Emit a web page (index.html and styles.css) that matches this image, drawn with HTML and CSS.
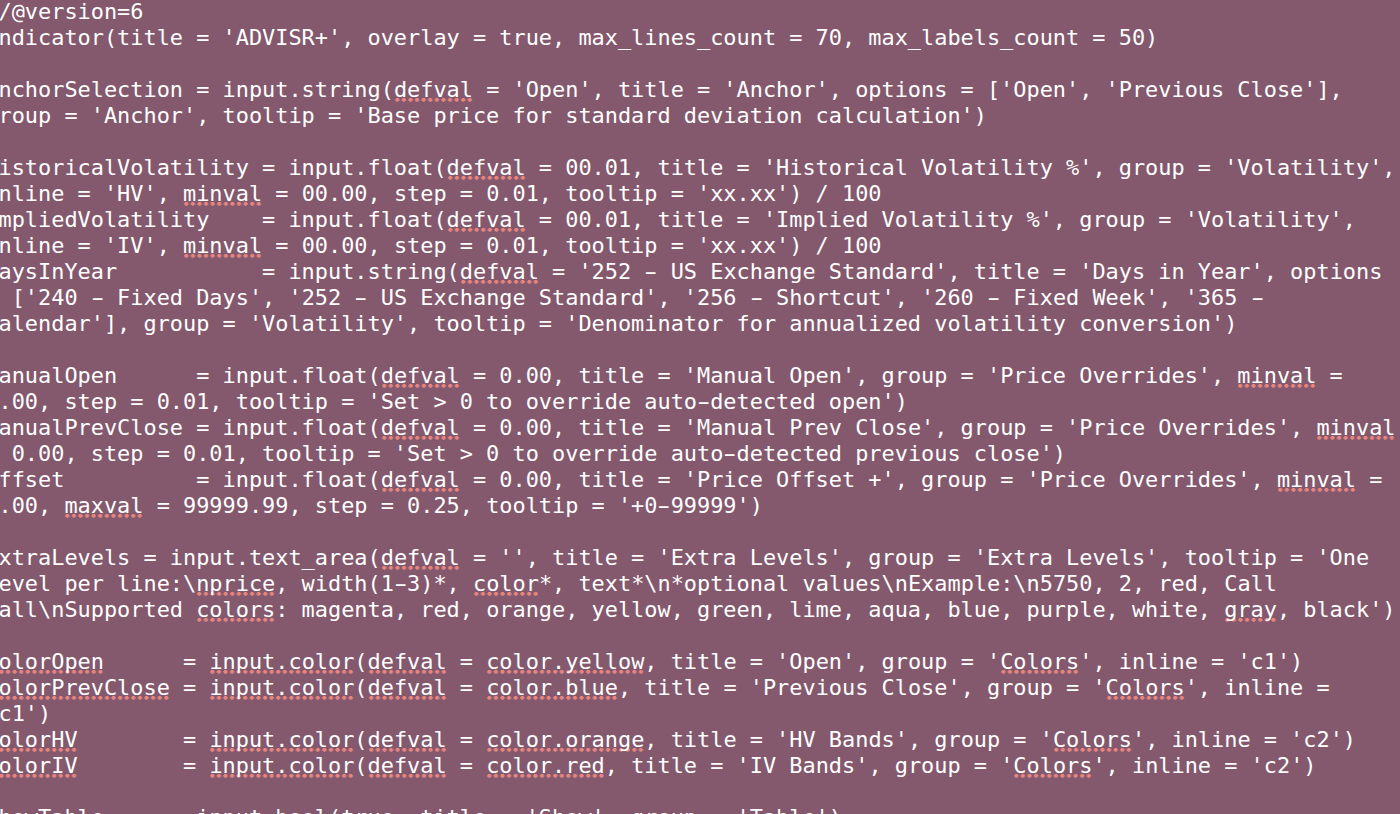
FILE: index.html
```html
<!DOCTYPE html>
<html lang="en">
<head>
<meta charset="utf-8">
<title>ADVISR+ source</title>
<link rel="stylesheet" href="styles.css">
</head>
<body>
<main class="editor">
<pre class="code">//@version=6
indicator(title = 'ADVISR+', overlay = true, max_lines_count = 70, max_labels_count = 50)

anchorSelection = input.string(<span class="sp">defval</span> = 'Open', title = 'Anchor', options = ['Open', 'Previous Close'],
group = 'Anchor', tooltip = 'Base price for standard deviation calculation')

historicalVolatility = input.float(<span class="sp">defval</span> = 00.01, title = 'Historical Volatility %', group = 'Volatility',
inline = 'HV', <span class="sp">minval</span> = 00.00, step = 0.01, tooltip = 'xx.xx') / 100
impliedVolatility    = input.float(<span class="sp">defval</span> = 00.01, title = 'Implied Volatility %', group = 'Volatility',
inline = 'IV', <span class="sp">minval</span> = 00.00, step = 0.01, tooltip = 'xx.xx') / 100
daysInYear           = input.string(<span class="sp">defval</span> = '252 <span class="dash">-</span> US Exchange Standard', title = 'Days in Year', options
= ['240 <span class="dash">-</span> Fixed Days', '252 <span class="dash">-</span> US Exchange Standard', '256 <span class="dash">-</span> Shortcut', '260 <span class="dash">-</span> Fixed Week', '365 <span class="dash">-</span>
Calendar'], group = 'Volatility', tooltip = 'Denominator for annualized volatility conversion')

manualOpen      = input.float(<span class="sp">defval</span> = 0.00, title = 'Manual Open', group = 'Price Overrides', <span class="sp">minval</span> =
0.00, step = 0.01, tooltip = 'Set &gt; 0 to override auto<span class="dash">-</span>detected open')
manualPrevClose = input.float(<span class="sp">defval</span> = 0.00, title = 'Manual Prev Close', group = 'Price Overrides', <span class="sp">minval</span>
= 0.00, step = 0.01, tooltip = 'Set &gt; 0 to override auto<span class="dash">-</span>detected previous close')
offset          = input.float(<span class="sp">defval</span> = 0.00, title = 'Price Offset +', group = 'Price Overrides', <span class="sp">minval</span> =
0.00, <span class="sp">maxval</span> = 99999.99, step = 0.25, tooltip = '+0<span class="dash">-</span>99999')

extraLevels = input.text_area(<span class="sp">defval</span> = '', title = 'Extra Levels', group = 'Extra Levels', tooltip = 'One
Level per line:\<span class="sp">nprice</span>, width(1<span class="dash">-</span>3)*, <span class="sp">color</span>*, text*\n*optional values\nExample:\n5750, 2, red, Call
Call\nSupported <span class="sp">colors</span>: magenta, red, orange, yellow, green, lime, aqua, blue, purple, white, <span class="sp">gray</span>, black')

<span class="sp">colorOpen</span>      = <span class="sp">input.color</span>(<span class="sp">defval</span> = <span class="sp">color.yellow</span>, title = 'Open', group = '<span class="sp">Colors</span>', inline = 'c1')
<span class="sp">colorPrevClose</span> = <span class="sp">input.color</span>(<span class="sp">defval</span> = <span class="sp">color.blue</span>, title = 'Previous Close', group = '<span class="sp">Colors</span>', inline =
'c1')
<span class="sp">colorHV</span>        = <span class="sp">input.color</span>(<span class="sp">defval</span> = <span class="sp">color.orange</span>, title = 'HV Bands', group = '<span class="sp">Colors</span>', inline = 'c2')
<span class="sp">colorIV</span>        = <span class="sp">input.color</span>(<span class="sp">defval</span> = <span class="sp">color.red</span>, title = 'IV Bands', group = '<span class="sp">Colors</span>', inline = 'c2')

showTable     = input.bool(true, title = 'Show', group = 'Table')</pre>
</main>
</body>
</html>
```

FILE: styles.css
```css
html, body {
  margin: 0;
  padding: 0;
  height: 100%;
  overflow: hidden;
  background: #84596d;
}

.editor {
  height: 100%;
  overflow: hidden;
}

.code {
  margin: -1px 0 0 -14.7px;
  padding: 0;
  font-family: "DejaVu Sans Mono", "Liberation Mono", monospace;
  font-size: 21.9px;
  line-height: 26px;
  color: #ffffff;
  white-space: pre;
}

.sp {
  background-image: radial-gradient(circle at 3.3px 2px, #e8847e 1.8px, rgba(232, 132, 126, 0) 2.3px);
  background-size: 6.6px 4.4px;
  background-repeat: repeat-x;
  background-position: 0 100%;
}

.dash {
  display: inline-block;
  transform: scaleX(1.7);
}
```
